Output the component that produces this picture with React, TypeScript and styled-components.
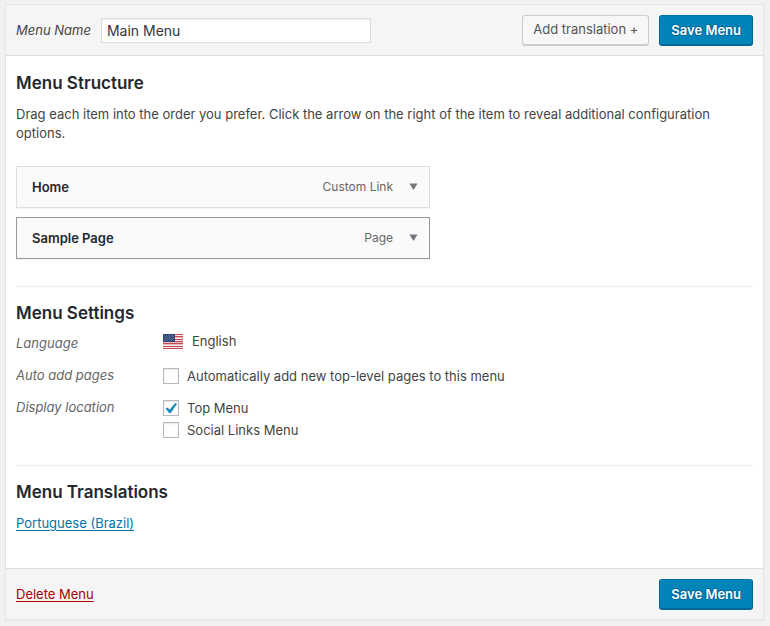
import React from "react";
import styled, { createGlobalStyle, css } from "styled-components";

const GlobalStyle = createGlobalStyle`
  *, *::before, *::after { box-sizing: border-box; }
  body {
    margin: 0;
    padding: 4px 6px 6px 5px;
    background: #f1f1f1;
    color: #444;
    font-family: Inter, "Liberation Sans", sans-serif;
    font-size: 13px;
    line-height: 19px;
  }
`;

const Panel = styled.form`
  background: #fff;
  border: 1px solid #e5e5e5;
  box-shadow: 0 1px 1px rgba(0, 0, 0, 0.04);
`;

const Bar = styled.div<{ $edge: "top" | "bottom" }>`
  display: flex;
  align-items: center;
  gap: 10px;
  height: 51px;
  padding: 0 10px;
  background: #f5f5f5;
  ${(p) =>
    p.$edge === "top"
      ? css`border-bottom: 1px solid #dedede;`
      : css`border-top: 1px solid #dedede;`}
`;

const NameLabel = styled.label`
  display: flex;
  flex: 1;
  align-items: center;
  gap: 10px;
  font-style: italic;
  white-space: nowrap;
`;

const NameInput = styled.input`
  width: 270px;
  height: 25px;
  padding: 0 5px;
  border: 1px solid #ddd;
  background: #fff;
  box-shadow: inset 0 1px 2px rgba(0, 0, 0, 0.07);
  color: #32373c;
  font-family: inherit;
  font-size: 14px;
`;

const Button = styled.button<{ $primary?: boolean }>`
  height: 30px;
  padding: 0 10px 2px;
  border: 1px solid #ccc;
  border-radius: 3px;
  background: #f7f7f7;
  box-shadow: 0 1px 0 #ccc;
  color: #555;
  font-family: inherit;
  font-size: 13px;
  white-space: nowrap;
  cursor: pointer;
  ${(p) =>
    p.$primary &&
    css`
      padding: 0 11px;
      border-color: #0073aa #006799 #006799;
      background: #0085ba;
      box-shadow: 0 1px 0 #006799;
      color: #fff;
      font-weight: 600;
      text-shadow: 0 -1px 1px #006799, 1px 0 1px #006799, 0 1px 1px #006799, -1px 0 1px #006799;
    `}
`;

const Body = styled.div`
  padding: 0 10px 35px;
`;

const Section = styled.section<{ $divided?: boolean }>`
  padding-top: 17px;
  ${(p) =>
    p.$divided &&
    css`
      padding-top: 16px;
      border-top: 1px solid #eee;
    `}
`;

const Heading = styled.h3`
  margin: 0;
  color: #23282d;
  font-size: 17px;
  font-weight: 600;
  line-height: 20px;
`;

const Description = styled.p`
  margin: 12px 0 23px;
`;

const ItemList = styled.ul`
  display: grid;
  gap: 9px;
  max-width: 414px;
  margin: 0 0 27px;
  padding: 0;
  list-style: none;
`;

const Item = styled.li<{ $active?: boolean }>`
  display: flex;
  align-items: center;
  height: 42px;
  padding: 0 11px 0 15px;
  border: 1px solid ${(p) => (p.$active ? "#999" : "#dfdfdf")};
  background: #fafafa;
  box-shadow: 0 1px 1px rgba(0, 0, 0, 0.04);
`;

const ItemTitle = styled.span`
  flex: 1;
  color: #23282d;
  font-weight: 600;
`;

const ItemType = styled.span`
  padding-bottom: 2px;
  color: #666;
  font-size: 12px;
`;

const Toggle = styled.button`
  display: flex;
  margin-left: 16px;
  padding: 0 0 1px;
  border: 0;
  background: none;
  color: #72777c;
  cursor: pointer;
`;

const Settings = styled.dl`
  display: grid;
  grid-template-columns: 147px 1fr;
  row-gap: 11px;
  margin: 9px 0 27px;
`;

const Term = styled.dt`
  padding-top: 2px;
  color: #666;
  font-style: italic;
`;

const Value = styled.dd`
  display: grid;
  align-content: start;
  gap: 3px;
  margin: 0;
`;

const Language = styled.span`
  display: flex;
  align-items: center;
  gap: 9px;
`;

const Choice = styled.label`
  display: flex;
  align-items: center;
  gap: 8px;
  padding-top: 4px;
  line-height: 16px;
  & + & {
    padding-top: 3px;
  }
`;

const CheckBox = styled.input`
  display: grid;
  place-content: center;
  width: 16px;
  height: 16px;
  margin: 0;
  appearance: none;
  border: 1px solid #b4b9be;
  background: #fff;
  box-shadow: inset 0 1px 2px rgba(0, 0, 0, 0.1);
  &:checked::before {
    content: "";
    width: 12px;
    height: 11px;
    background: #1e8cbe;
    clip-path: polygon(4% 55%, 20% 45%, 40% 64%, 84% 4%, 100% 14%, 47% 98%, 36% 98%);
  }
`;

const Link = styled.a<{ $danger?: boolean }>`
  color: ${(p) => (p.$danger ? "#a00" : "#0073aa")};
  text-decoration: underline;
  text-underline-offset: 2px;
`;

const Translations = styled.p`
  margin: 12px 0 0;
`;

const FooterLead = styled.div`
  flex: 1;
`;

function Arrow() {
  return (
    <svg width="9" height="7" viewBox="0 0 9 7" aria-hidden="true">
      <path d="M.5 .5h8L4.9 6.5h-.8z" fill="currentColor" />
    </svg>
  );
}

function UsFlag() {
  return (
    <svg width="20" height="15" viewBox="0 0 20 15" aria-hidden="true">
      <path fill="#f4e9ea" d="M0 0h20v15H0z" />
      <path
        fill="#c54a52"
        d="M0 0h20v1H0zM0 14h20v1H0zM0 12h20v1H0zM0 9h20v1H0zM12 7h8v1h-8zM12 5h8v1h-8zM12 2h8v1h-8z"
      />
      <path fill="#e9b9bd" d="M0 10h20v1H0zM0 8h20v1H0zM12 3h8v1h-8z" />
      <path fill="#304573" d="M0 0h12v8H0z" />
      <path
        stroke="#6f7fa3"
        strokeOpacity=".6"
        strokeDasharray="1 1"
        d="M1 1.5h10M2 2.5h9M1 3.5h10M2 4.5h9M1 5.5h10M2 6.5h9"
      />
    </svg>
  );
}

const items = [
  { title: "Home", type: "Custom Link", active: false },
  { title: "Sample Page", type: "Page", active: true },
];

export default function App() {
  return (
    <>
      <GlobalStyle />
      <Panel onSubmit={(e) => e.preventDefault()}>
        <Bar $edge="top">
          <NameLabel>
            Menu Name
            <NameInput type="text" defaultValue="Main Menu" />
          </NameLabel>
          <Button type="button">Add translation +</Button>
          <Button type="submit" $primary>Save Menu</Button>
        </Bar>
        <Body>
          <Section>
            <Heading>Menu Structure</Heading>
            <Description>
              Drag each item into the order you prefer. Click the arrow on the right of the item to
              reveal additional configuration options.
            </Description>
            <ItemList>
              {items.map((item) => (
                <Item key={item.title} $active={item.active}>
                  <ItemTitle>{item.title}</ItemTitle>
                  <ItemType>{item.type}</ItemType>
                  <Toggle type="button" aria-label={`Edit ${item.title}`}>
                    <Arrow />
                  </Toggle>
                </Item>
              ))}
            </ItemList>
          </Section>
          <Section $divided>
            <Heading>Menu Settings</Heading>
            <Settings>
              <Term>Language</Term>
              <Value>
                <Language>
                  <UsFlag />
                  English
                </Language>
              </Value>
              <Term>Auto add pages</Term>
              <Value>
                <Choice>
                  <CheckBox type="checkbox" />
                  Automatically add new top-level pages to this menu
                </Choice>
              </Value>
              <Term>Display location</Term>
              <Value>
                <Choice>
                  <CheckBox type="checkbox" defaultChecked />
                  Top Menu
                </Choice>
                <Choice>
                  <CheckBox type="checkbox" />
                  Social Links Menu
                </Choice>
              </Value>
            </Settings>
          </Section>
          <Section $divided>
            <Heading>Menu Translations</Heading>
            <Translations>
              <Link href="#portuguese-brazil">Portuguese (Brazil)</Link>
            </Translations>
          </Section>
        </Body>
        <Bar $edge="bottom">
          <FooterLead>
            <Link href="#delete" $danger>Delete Menu</Link>
          </FooterLead>
          <Button type="submit" $primary>Save Menu</Button>
        </Bar>
      </Panel>
    </>
  );
}
